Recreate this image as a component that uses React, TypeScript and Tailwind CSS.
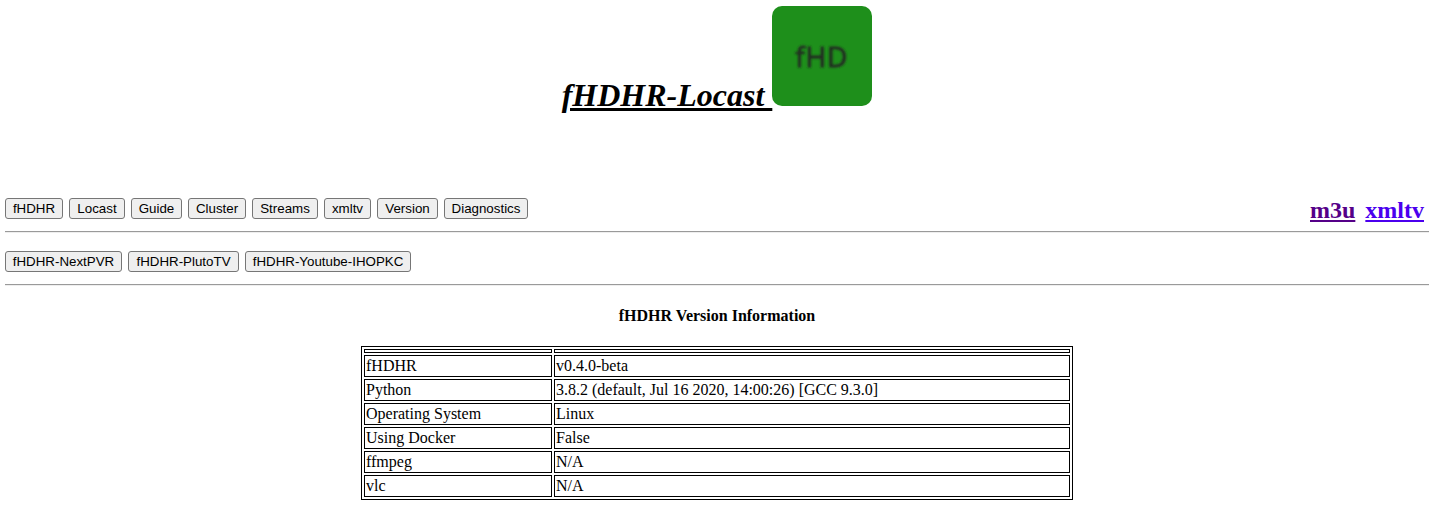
const navItems = [
  { label: "fHDHR", width: "w-[58px]" },
  { label: "Locast", width: "w-[56px]" },
  { label: "Guide", width: "w-[51px]" },
  { label: "Cluster", width: "w-[58px]" },
  { label: "Streams", width: "w-[66px]" },
  { label: "xmltv", width: "w-[47px]" },
  { label: "Version", width: "w-[61px]" },
  { label: "Diagnostics", width: "w-[84px]" },
];

const clusterItems = [
  { label: "fHDHR-NextPVR", width: "w-[117px]" },
  { label: "fHDHR-PlutoTV", width: "w-[111px]" },
  { label: "fHDHR-Youtube-IHOPKC", width: "w-[166px]" },
];

const versions = [
  ["fHDHR", "v0.4.0-beta"],
  ["Python", "3.8.2 (default, Jul 16 2020, 14:00:26) [GCC 9.3.0]"],
  ["Operating System", "Linux"],
  ["Using Docker", "False"],
  ["ffmpeg", "N/A"],
  ["vlc", "N/A"],
];

function NavButton({ label, width }: { label: string; width: string }) {
  return (
    <button
      className={`${width} flex h-[21px] items-center justify-center rounded-[3px] border border-[#767676] bg-[#efefef] font-['Liberation_Sans',Arial,sans-serif] text-[13.333px] leading-[15px] whitespace-nowrap text-black`}
    >
      {label}
    </button>
  );
}

function Divider() {
  return <div className="h-[2px] border-t border-b border-t-[#9a9a9a] border-b-[#eeeeee]" />;
}

function Logo() {
  return (
    <svg width="100" height="100" viewBox="0 0 100 100" className="block shrink-0">
      <filter id="soften">
        <feGaussianBlur stdDeviation="0.8" />
      </filter>
      <rect width="100" height="100" rx="10" fill="#1e8f1b" />
      <text
        x="49.3"
        y="61"
        textAnchor="middle"
        textLength="52"
        fontSize="28"
        fill="#242c24"
        stroke="#242c24"
        strokeWidth="0.8"
        filter="url(#soften)"
        className="font-['Open_Sans','Noto_Sans',sans-serif]"
      >
        fHD
      </text>
    </svg>
  );
}

export default function App() {
  return (
    <div className="h-[509px] overflow-hidden bg-white pl-[5px] font-['Liberation_Serif','Times_New_Roman',serif] text-black">
      <header className="flex h-[198px] items-start justify-center pt-[6px]">
        <h1 className="mt-[71px] text-[32px] leading-[37px] font-bold whitespace-pre italic underline">
          {"fHDHR-Locast "}
        </h1>
        <Logo />
      </header>
      <nav className="flex h-[33px] items-start justify-between pr-[5px]">
        <div className="flex gap-[6px]">
          {navItems.map((item) => (
            <NavButton key={item.label} {...item} />
          ))}
        </div>
        <div className="flex gap-[10px] text-[24px] leading-[27px] font-bold">
          <a href="#m3u" className="-mt-px text-[#550088] underline">m3u</a>
          <a href="#xmltv" className="-mt-px text-[#4b00ee] underline">xmltv</a>
        </div>
      </nav>
      <Divider />
      <div className="flex h-[51px] items-start gap-[6px] pt-[18px]">
        {clusterItems.map((item) => (
          <NavButton key={item.label} {...item} />
        ))}
      </div>
      <Divider />
      <main className="flex flex-col items-center">
        <h4 className="mt-[21px] h-[39px] text-[16px] leading-[18px] font-bold">fHDHR Version Information</h4>
        <div className="grid w-[712px] grid-cols-[188px_516px] gap-[2px] border border-black p-[2px] text-[16px] leading-[18px]">
          <div className="h-[4px] border border-black" />
          <div className="h-[4px] border border-black" />
          {versions.flatMap(([name, value]) => [
            <div key={`${name}-name`} className="h-[22px] border border-black p-px">{name}</div>,
            <div key={`${name}-value`} className="h-[22px] border border-black p-px">{value}</div>,
          ])}
        </div>
      </main>
    </div>
  );
}
